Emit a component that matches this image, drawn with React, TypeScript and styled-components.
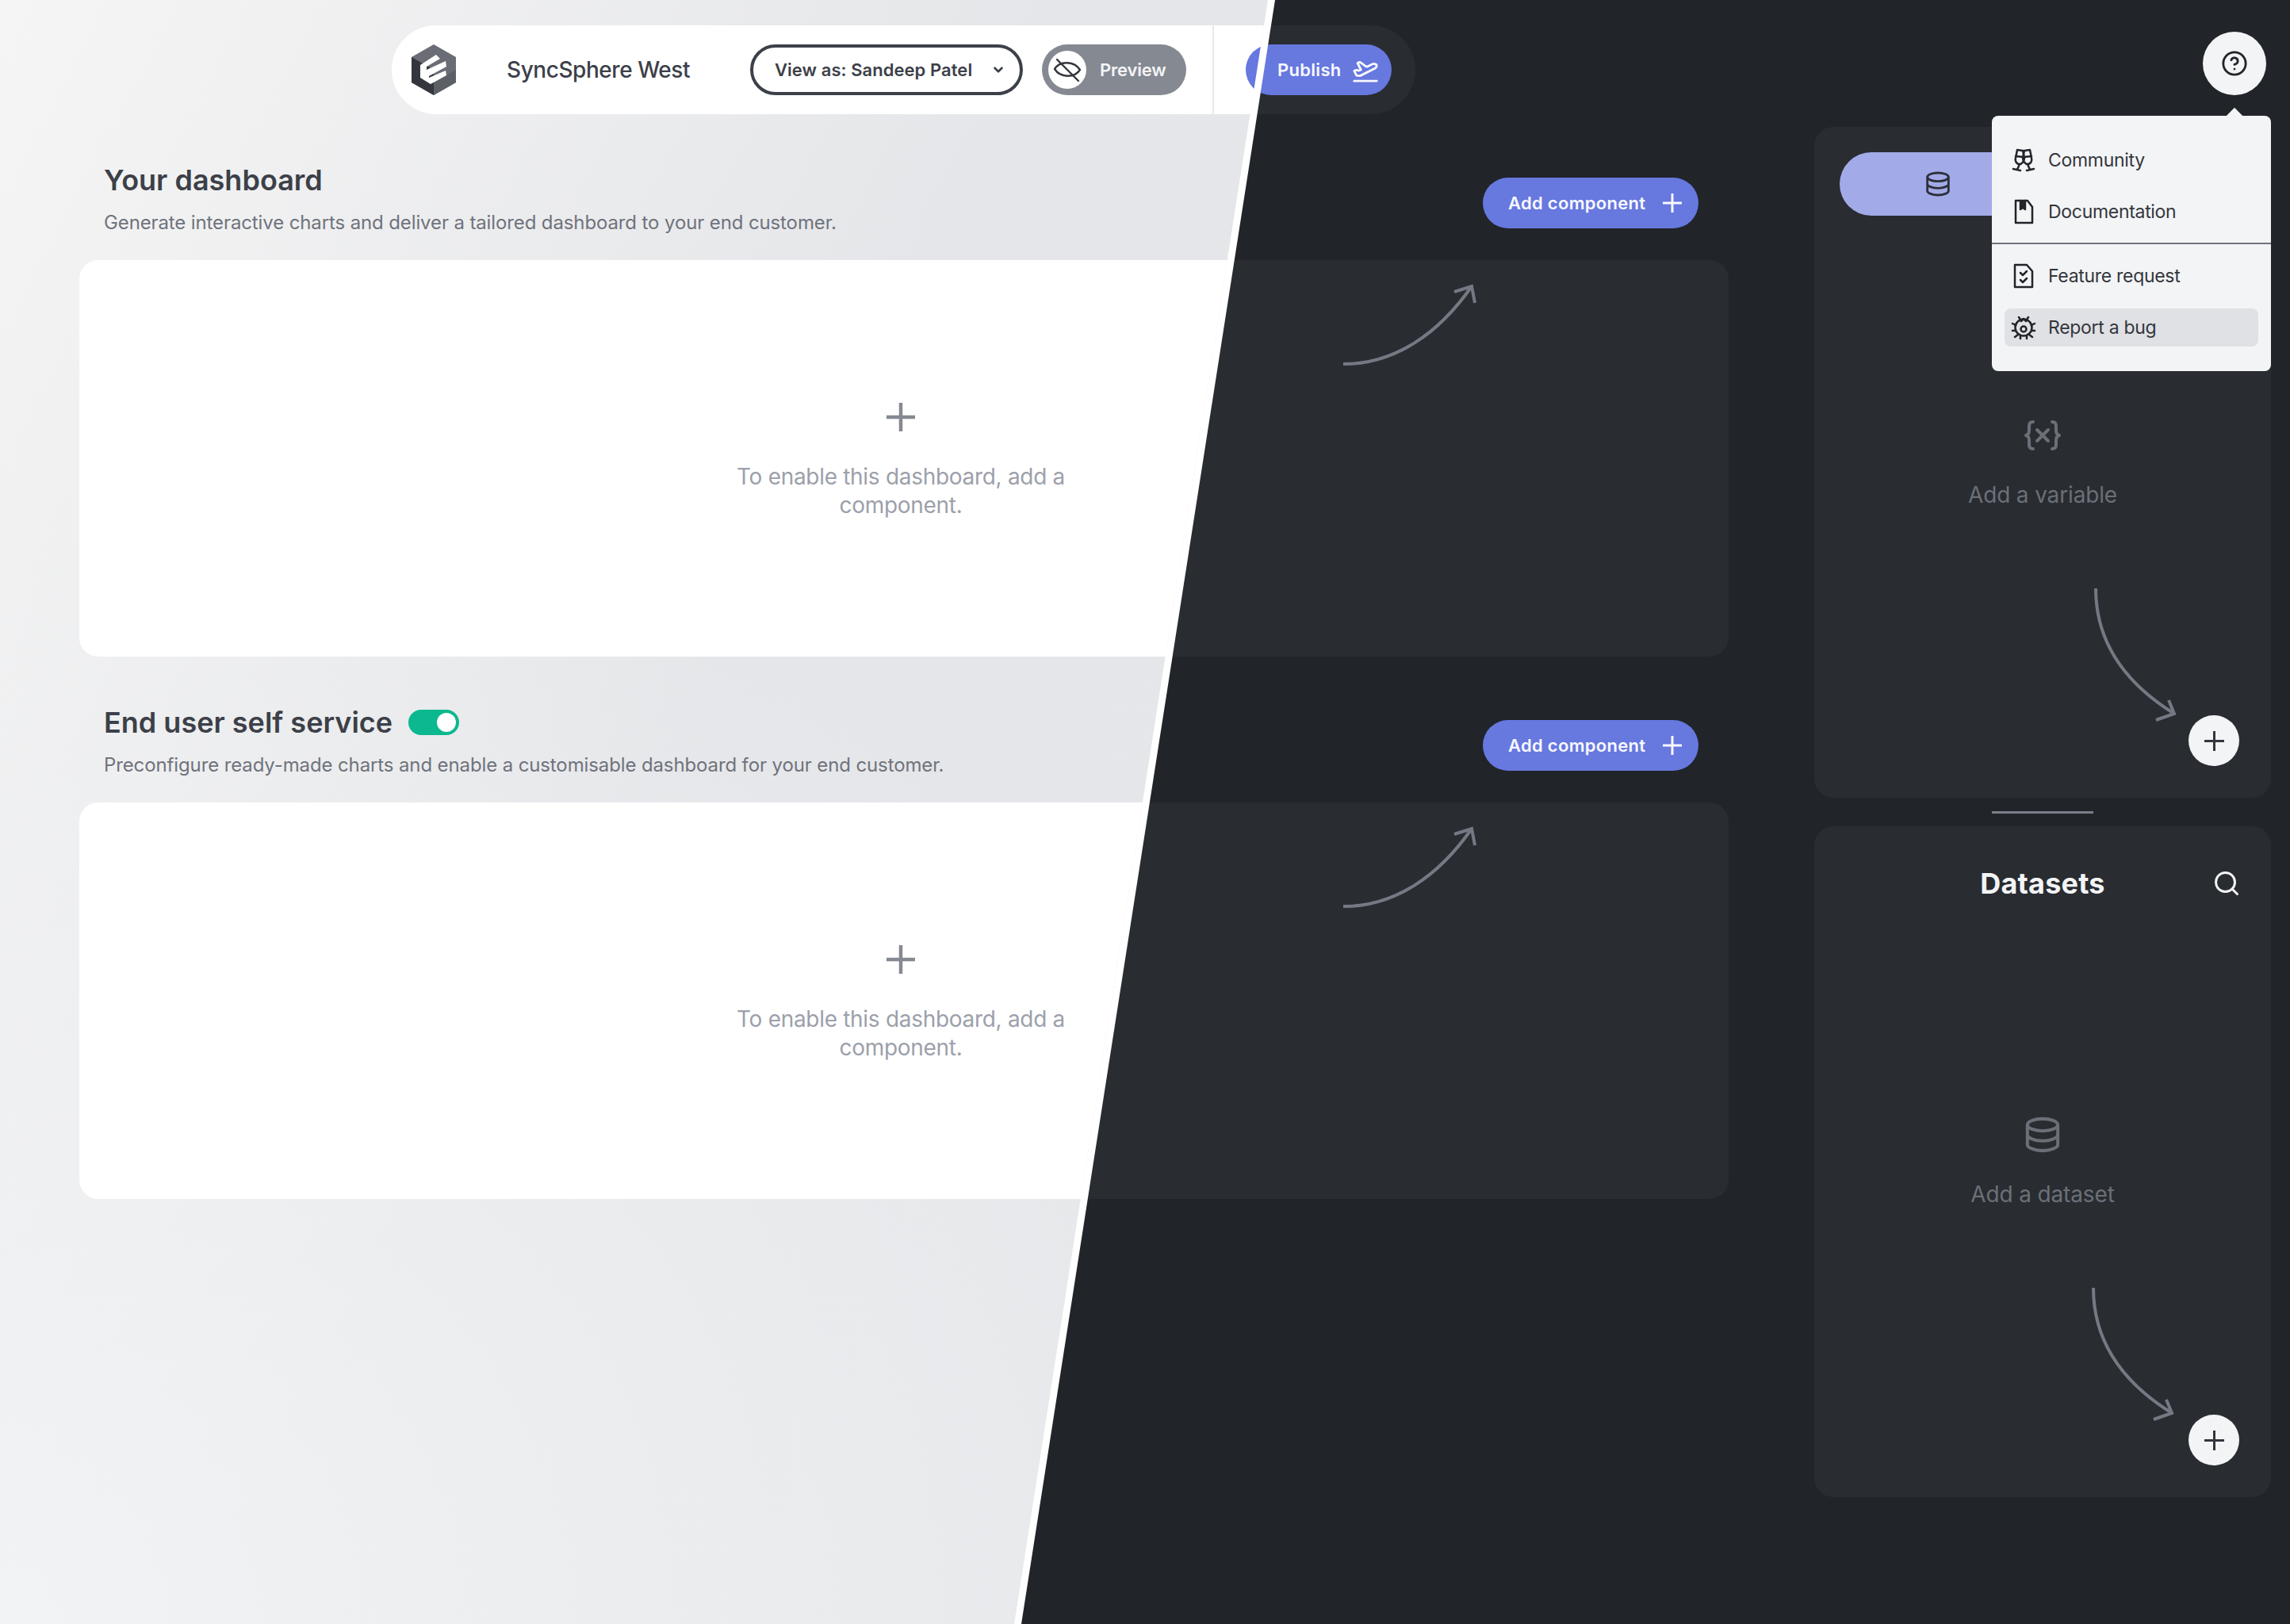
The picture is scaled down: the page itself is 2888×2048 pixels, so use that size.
import React from 'react'
import styled, { createGlobalStyle, ThemeProvider } from 'styled-components'
import { ChevronDown, CircleHelp, PlaneTakeoff, Search } from 'lucide-react'

interface BoardTheme {
  page: string
  surface: string
  card: string
  rule: string
  title: string
  body: string
  muted: string
  arrow: string
}

const light: BoardTheme = {
  page: `radial-gradient(ellipse 1700px 1500px at 0% 100%, #f2f3f4 0%, rgba(242,243,244,0) 100%),
    linear-gradient(118deg, #f5f5f5 0%, #e5e6e9 34%, #e7e8eb 100%)`,
  surface: '#ffffff',
  card: '#ffffff',
  rule: '#e7e8eb',
  title: '#3c4048',
  body: '#6f737c',
  muted: '#9ca0ab',
  arrow: '#858992',
}

const dark: BoardTheme = {
  page: '#212429',
  surface: '#292c31',
  card: '#292c31',
  rule: '#33363c',
  title: '#f3f4f6',
  body: '#858992',
  muted: '#6b7078',
  arrow: '#747984',
}

const GlobalStyle = createGlobalStyle`
  html, body { margin: 0; padding: 0; background: #212429; }
  body { font-family: Inter, "Liberation Sans", sans-serif; }
  * { box-sizing: border-box; }
`

const Stage = styled.div`
  position: relative;
  width: 2888px;
  height: 2048px;
  overflow: hidden;
`

const SplitEdge = styled.div`
  position: absolute;
  inset: 0;
  background: #ffffff;
  clip-path: polygon(0 0, 1608px 0, 1288px 2048px, 0 2048px);
`

const LightSide = styled.div`
  position: absolute;
  inset: 0;
  clip-path: polygon(0 0, 1599px 0, 1279px 2048px, 0 2048px);
`

const Page = styled.div`
  width: 2888px;
  height: 2048px;
  background: ${p => (p.theme as BoardTheme).page};
`

const TopRow = styled.header`
  display: flex;
  justify-content: space-between;
  height: 160px;
  padding: 32px 30px 0 494px;
`

const TopBar = styled.div`
  display: flex;
  align-items: center;
  width: 1291px;
  height: 112px;
  padding: 0 0 0 24px;
  border-radius: 56px;
  background: ${p => (p.theme as BoardTheme).surface};
`

const LogoMark = styled.svg`
  width: 58px;
  height: 66px;
  margin-right: 63px;
  flex: none;
`

const BrandName = styled.span`
  width: 307px;
  font-size: 28px;
  font-weight: 500;
  letter-spacing: -0.45px;
  white-space: nowrap;
  color: ${p => (p.theme as BoardTheme).title};
`

const ViewAsSelect = styled.button`
  display: flex;
  align-items: center;
  justify-content: space-between;
  width: 344px;
  height: 64px;
  padding: 0 18px 0 27px;
  border: 4px solid #3c4048;
  border-radius: 32px;
  background: ${p => (p.theme as BoardTheme).surface};
  color: #3c4048;
  font: 600 22px Inter, sans-serif;
  letter-spacing: 0.05px;
  white-space: nowrap;
`

const PreviewButton = styled.button`
  display: flex;
  align-items: center;
  gap: 17px;
  width: 182px;
  height: 64px;
  margin-left: 24px;
  padding: 0 8px;
  border: 0;
  border-radius: 32px;
  background: #858992;
  color: #f3f4f6;
  font: 600 22px Inter, sans-serif;
  letter-spacing: -0.2px;
`

const PreviewKnob = styled.span`
  display: flex;
  align-items: center;
  justify-content: center;
  width: 48px;
  height: 48px;
  border-radius: 50%;
  background: #ffffff;
`

const BarRule = styled.span`
  width: 2px;
  height: 112px;
  margin: 0 40px 0 33px;
  background: ${p => (p.theme as BoardTheme).rule};
`

const PrimaryButton = styled.button<{ $width: number; $inset: number }>`
  display: flex;
  align-items: center;
  justify-content: space-between;
  flex: none;
  width: ${p => p.$width}px;
  height: 64px;
  padding: 0 ${p => p.$inset}px 0 32px;
  border: 0;
  border-radius: 32px;
  background: #6778df;
  color: #f7f8ff;
  font: 600 22px Inter, sans-serif;
  letter-spacing: 0.3px;
  white-space: nowrap;
`

const PublishLabel = styled.span`
  margin-left: 8px;
`

const HelpWrap = styled.div`
  position: relative;
  width: 80px;
  height: 80px;
  margin-top: 8px;
`

const HelpButton = styled.button`
  display: flex;
  align-items: center;
  justify-content: center;
  width: 80px;
  height: 80px;
  padding: 0;
  border: 0;
  border-radius: 50%;
  background: #f3f4f6;
  color: #212429;
`

const HelpMenu = styled.nav`
  position: absolute;
  z-index: 2;
  top: 106px;
  right: -6px;
  width: 352px;
  height: 322px;
  padding: 32px 16px 0;
  border-radius: 8px;
  background: #f3f4f6;
  &::before {
    content: '';
    position: absolute;
    top: -10px;
    right: 36px;
    width: 20px;
    height: 20px;
    background: #f3f4f6;
    transform: rotate(45deg) scale(0.72);
  }
`

const MenuRule = styled.hr`
  height: 2px;
  margin: 15px -16px 16px;
  border: 0;
  background: #6f747d;
`

const MenuItem = styled.a<{ $active?: boolean; $last?: boolean }>`
  display: flex;
  align-items: center;
  gap: 15px;
  height: 48px;
  margin-bottom: ${p => (p.$last ? 0 : 17)}px;
  padding: 0 8px;
  border-radius: 8px;
  background: ${p => (p.$active ? '#e0e1e5' : 'transparent')};
  color: #33363c;
  font-size: 23px;
  letter-spacing: -0.3px;
`

const MenuIcon = styled.svg`
  width: 32px;
  height: 32px;
  flex: none;
  fill: none;
  stroke: #212429;
  stroke-width: 2.5;
  stroke-linecap: round;
  stroke-linejoin: round;
`

const Body = styled.div`
  display: grid;
  grid-template-columns: 2080px 576px;
  gap: 108px;
  padding: 0 24px 0 100px;
`

const Main = styled.main`
  display: flex;
  flex-direction: column;
  gap: 16px;
`

const SectionHeader = styled.div`
  display: flex;
  align-items: flex-end;
  justify-content: space-between;
  height: 168px;
  padding: 0 38px 31px 31px;
`

const TitleRow = styled.div`
  display: flex;
  align-items: center;
  gap: 20px;
  height: 44px;
  margin-bottom: 16px;
`

const SectionTitle = styled.h2`
  margin: 0;
  font-size: 36px;
  font-weight: 600;
  letter-spacing: 0;
  color: ${p => (p.theme as BoardTheme).title};
`

const SectionHint = styled.p`
  margin: 0;
  font-size: 24px;
  line-height: 32px;
  letter-spacing: -0.12px;
  color: ${p => (p.theme as BoardTheme).body};
`

const AddButtonSlot = styled.div`
  margin-bottom: 9px;
`

const Toggle = styled.span`
  display: flex;
  justify-content: flex-end;
  align-items: center;
  width: 64px;
  height: 32px;
  padding: 4px;
  border-radius: 16px;
  background: #0bb88f;
  &::after {
    content: '';
    width: 24px;
    height: 24px;
    border-radius: 50%;
    background: #ffffff;
  }
`

const Card = styled.section`
  position: relative;
  display: flex;
  flex-direction: column;
  align-items: center;
  height: 500px;
  padding: 180px 8px 0 0;
  border-radius: 24px;
  background: ${p => (p.theme as BoardTheme).card};
`

const CardHint = styled.p`
  width: 460px;
  margin: 39px 0 0;
  text-align: center;
  font-size: 28px;
  line-height: 36px;
  letter-spacing: -0.3px;
  color: ${p => (p.theme as BoardTheme).muted};
`

const CardArrow = styled.svg`
  position: absolute;
  left: 1590px;
  top: 27px;
  width: 175px;
  height: 110px;
  fill: none;
  stroke: ${p => (p.theme as BoardTheme).arrow};
  stroke-width: 4;
`

const Sidebar = styled.aside`
  display: flex;
  flex-direction: column;
`

const Panel = styled.section`
  position: relative;
  display: flex;
  flex-direction: column;
  align-items: center;
  height: 846px;
  padding-top: 32px;
  border-radius: 24px;
  background: #292c31;
`

const PanelHeader = styled.div`
  position: relative;
  display: flex;
  align-items: center;
  justify-content: center;
  width: 100%;
  height: 80px;
  padding: 0 32px;
`

const TabRail = styled.div`
  display: flex;
  width: 100%;
  height: 80px;
`

const ActiveTab = styled.span`
  display: flex;
  align-items: center;
  justify-content: center;
  width: 248px;
  border-radius: 40px;
  background: #a3aae8;
`

const PanelTitle = styled.h3`
  margin: 0;
  font-size: 36px;
  font-weight: 700;
  letter-spacing: 0.2px;
  color: #f3f4f6;
`

const PanelSearch = styled.span`
  position: absolute;
  right: 38px;
  display: flex;
  color: #f3f4f6;
`

const EmptyGlyph = styled.div`
  display: flex;
  align-items: center;
  justify-content: center;
  height: 44px;
  margin-top: 255px;
`

const VariableIcon = styled.svg`
  width: 48px;
  height: 44px;
  fill: none;
  stroke: #6b7078;
  stroke-width: 4;
  stroke-linecap: round;
  stroke-linejoin: round;
`

const EmptyLabel = styled.p`
  margin: 35px 0 0;
  font-size: 28px;
  line-height: 36px;
  letter-spacing: -0.15px;
  color: #6b7078;
`

const PanelArrow = styled.svg<{ $left: number }>`
  position: absolute;
  left: ${p => p.$left}px;
  top: 580px;
  width: 110px;
  height: 170px;
  fill: none;
  stroke: #747984;
  stroke-width: 4;
`

const RoundAdd = styled.button`
  position: absolute;
  right: 40px;
  bottom: 40px;
  display: flex;
  align-items: center;
  justify-content: center;
  width: 64px;
  height: 64px;
  padding: 0;
  border: 0;
  border-radius: 50%;
  background: #f3f4f6;
`

const DragHandle = styled.div`
  display: flex;
  align-items: center;
  justify-content: center;
  height: 36px;
  &::after {
    content: '';
    width: 128px;
    height: 3px;
    background: #7a808a;
  }
`

const Cross: React.FC<{ size: number; weight: number; color: string }> = ({ size, weight, color }) => (
  <svg width={size} height={size} viewBox={`0 0 ${size} ${size}`} stroke={color} strokeWidth={weight}>
    <path d={`M0 ${size / 2}H${size}M${size / 2} 0V${size}`} />
  </svg>
)

const Logo = () => (
  <LogoMark viewBox="0 0 58 66">
    <path d="M29 1 57 17v32L29 65 1 49V17z" fill="#6a6d75" />
    <path d="M1 17 29 33v32L1 49z" fill="#33363c" />
    <path d="M29 65 57 49V33L29 50z" fill="#5c5f66" />
    <path d="M12 27 32 14l5 5-17 10v4l24-11 1 7-22 12v2l21-9 1 6-20 11-13-8z" fill="#ffffff" />
  </LogoMark>
)

const EyeCrossed = () => (
  <svg width="34" height="34" viewBox="0 0 34 34" fill="none" stroke="#33363c" strokeWidth="2.4" strokeLinecap="round">
    <path d="M1 16C8 5 26 6 33 17 26 28 8 27 1 16z" />
    <path d="M4 4 31 31" />
  </svg>
)

const Database: React.FC<{ size: number; color: string }> = ({ size, color }) => (
  <svg width={size} height={size} viewBox="0 0 24 24" fill="none" stroke={color} strokeWidth="2.1" strokeLinejoin="round">
    <ellipse cx="12" cy="5.5" rx="10" ry="4" />
    <path d="M2 5.5v13c0 2 4.500 4 10 4s10-2 10-4v-13M2 12c0 2 4.500 4 10 4s10-2 10-4" />
  </svg>
)

const CommunityIcon = () => (
  <MenuIcon viewBox="0 0 32 32">
    <path d="M8 3l7 1 2 9c0 4-3 8-6 8-4 0-6-4-5-8zM6 11l10 1M11 21 8 28M3 27l9 2" />
    <path d="M24 3l-7 1-2 9c0 4 3 8 6 8 4 0 6-4 5-8zM26 11l-10 1M21 21l3 7M29 27l-9 2" />
  </MenuIcon>
)

const DocsIcon = () => (
  <MenuIcon viewBox="0 0 32 32">
    <path d="M6 2h15l6 8v20H6z" />
    <path d="M12 2v11l3-2 3 2V2" fill="#212429" />
  </MenuIcon>
)

const FeatureIcon = () => (
  <MenuIcon viewBox="0 0 32 32">
    <path d="M5 2h15l7 8v20H5z" />
    <path d="M12 12l3 3 5-5M12 21l3 3 5-5" />
  </MenuIcon>
)

const BugIcon = () => (
  <MenuIcon viewBox="0 0 32 32">
    <circle cx="16" cy="16" r="10.500" />
    <circle cx="16" cy="18" r="3.500" />
    <path d="M13 8l3-3 3 3M10 3l2 3M22 3l-2 3M2 11l4 2M30 11l-4 2M2 20h4M30 20h-4M5 28l4-3M27 28l-4-3M12 27v3M20 27v3" />
  </MenuIcon>
)

const sections = [
  {
    title: 'Your dashboard',
    hint: 'Generate interactive charts and deliver a tailored dashboard to your end customer.',
    toggle: false,
  },
  {
    title: 'End user self service',
    hint: 'Preconfigure ready-made charts and enable a customisable dashboard for your end customer.',
    toggle: true,
  },
]

const panelArrow = (
  <>
    <path d="M4 2C4 70 42 122 103 160" />
    <path d="M96 143l7 17-23 8" />
  </>
)

const Side = () => (
  <Sidebar>
    <Panel>
      <PanelHeader>
        <TabRail>
          <ActiveTab>
            <Database size={32} color="#2c3038" />
          </ActiveTab>
        </TabRail>
      </PanelHeader>
      <EmptyGlyph>
        <VariableIcon viewBox="0 0 48 44">
          <path d="M12 5c-4 0-5 2-5 5v6c0 3-1 5-4 6 3 1 4 3 4 6v6c0 3 1 5 5 5M36 5c4 0 5 2 5 5v6c0 3 1 5 4 6-3 1-4 3-4 6v6c0 3-1 5-5 5" />
          <path d="M17 15l14 14M31 15 17 29" />
        </VariableIcon>
      </EmptyGlyph>
      <EmptyLabel>Add a variable</EmptyLabel>
      <PanelArrow $left={351} viewBox="0 0 110 170">{panelArrow}</PanelArrow>
      <RoundAdd><Cross size={25} weight={3} color="#33363c" /></RoundAdd>
    </Panel>
    <DragHandle />
    <Panel>
      <PanelHeader>
        <PanelTitle>Datasets</PanelTitle>
        <PanelSearch><Search size={36} strokeWidth={2} /></PanelSearch>
      </PanelHeader>
      <EmptyGlyph>
        <Database size={46} color="#6b7078" />
      </EmptyGlyph>
      <EmptyLabel>Add a dataset</EmptyLabel>
      <PanelArrow $left={348} viewBox="0 0 110 170">{panelArrow}</PanelArrow>
      <RoundAdd><Cross size={25} weight={3} color="#33363c" /></RoundAdd>
    </Panel>
  </Sidebar>
)

const Help = () => (
  <HelpWrap>
    <HelpButton><CircleHelp size={34} strokeWidth={2} /></HelpButton>
    <HelpMenu>
      <MenuItem><CommunityIcon />Community</MenuItem>
      <MenuItem $last><DocsIcon />Documentation</MenuItem>
      <MenuRule />
      <MenuItem><FeatureIcon />Feature request</MenuItem>
      <MenuItem $active $last><BugIcon />Report a bug</MenuItem>
    </HelpMenu>
  </HelpWrap>
)

const Board: React.FC<{ chrome?: boolean }> = ({ chrome }) => (
  <Page>
    <TopRow>
      <TopBar>
        <Logo />
        <BrandName>SyncSphere West</BrandName>
        <ViewAsSelect>View as: Sandeep Patel <ChevronDown size={18} strokeWidth={3.5} /></ViewAsSelect>
        <PreviewButton>
          <PreviewKnob><EyeCrossed /></PreviewKnob>
          Preview
        </PreviewButton>
        <BarRule />
        <PrimaryButton $width={184} $inset={16}>
          <PublishLabel>Publish</PublishLabel>
          <PlaneTakeoff size={34} strokeWidth={2} />
        </PrimaryButton>
      </TopBar>
      {chrome && <Help />}
    </TopRow>
    <Body>
      <Main>
        {sections.map(s => (
          <div key={s.title}>
            <SectionHeader>
              <div>
                <TitleRow>
                  <SectionTitle>{s.title}</SectionTitle>
                  {s.toggle && <Toggle />}
                </TitleRow>
                <SectionHint>{s.hint}</SectionHint>
              </div>
              <AddButtonSlot>
                <PrimaryButton $width={272} $inset={21}>
                  Add component
                  <Cross size={24} weight={3} color="#f7f8ff" />
                </PrimaryButton>
              </AddButtonSlot>
            </SectionHeader>
            <Card>
              <Cross size={36} weight={4.5} color="#858992" />
              <CardHint>To enable this dashboard, add a component.</CardHint>
              <CardArrow viewBox="0 0 175 110">
                <path d="M4 104C70 104 125 65 166 6" />
                <path d="M144 13l22-7 4 21" />
              </CardArrow>
            </Card>
          </div>
        ))}
      </Main>
      {chrome && <Side />}
    </Body>
  </Page>
)

export default function App() {
  return (
    <Stage>
      <GlobalStyle />
      <ThemeProvider theme={dark}>
        <Board chrome />
      </ThemeProvider>
      <SplitEdge />
      <LightSide>
        <ThemeProvider theme={light}>
          <Board />
        </ThemeProvider>
      </LightSide>
    </Stage>
  )
}
